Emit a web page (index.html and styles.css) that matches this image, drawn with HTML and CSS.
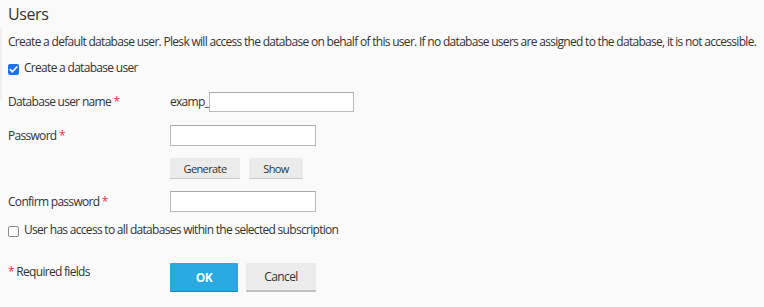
FILE: index.html
```html
<!DOCTYPE html>
<html lang="en">
<head>
<meta charset="utf-8">
<title>Users</title>
<link rel="stylesheet" href="styles.css">
</head>
<body>
<div class="page">
  <div class="edge"></div>
  <h2 class="title">Users</h2>
  <p class="desc">Create a default database user. Plesk will access the database on behalf of this user. If no database users are assigned to the database, it is not accessible.</p>
  <label class="check-row first">
    <span class="box checked"><svg viewBox="0 0 11 11" width="11" height="11"><path d="M2.3 5.6 L4.4 7.8 L8.8 3.0" fill="none" stroke="#fff" stroke-width="1.7" stroke-linecap="round" stroke-linejoin="round"/></svg></span>
    <span>Create a database user</span>
  </label>
  <div class="row r-user">
    <div class="label">Database user name <span class="req">*</span></div>
    <div class="field"><span class="prefix">examp_</span><span class="input w-user"></span></div>
  </div>
  <div class="row r-pass">
    <div class="label">Password <span class="req">*</span></div>
    <div class="field"><span class="input w-pass"></span></div>
  </div>
  <div class="row r-btns">
    <div class="label"></div>
    <div class="field gap9"><button class="btn small w-gen">Generate</button><button class="btn small w-show">Show</button></div>
  </div>
  <div class="row r-conf">
    <div class="label">Confirm password <span class="req">*</span></div>
    <div class="field"><span class="input w-pass"></span></div>
  </div>
  <label class="check-row second">
    <span class="box"></span>
    <span>User has access to all databases within the selected subscription</span>
  </label>
  <div class="row r-foot">
    <div class="label foot-label"><span class="req">*</span> Required fields</div>
    <div class="field gap8"><button class="btn primary">OK</button><button class="btn cancel">Cancel</button></div>
  </div>
</div>
</body>
</html>
```

FILE: styles.css
```css
html, body {
  margin: 0;
  padding: 0;
  background: #fafafa;
}
body {
  font-family: "Open Sans", "Liberation Sans", sans-serif;
  font-size: 12px;
  letter-spacing: -0.7px;
  color: #333;
}
.page {
  position: relative;
  padding: 0 8px;
  height: 307px;
  box-sizing: border-box;
  overflow: hidden;
}
.edge {
  position: absolute;
  left: 0;
  top: 28px;
  width: 2px;
  height: 72px;
  background: #efefef;
}
.title {
  margin: 0;
  padding-top: 4px;
  font-size: 16px;
  line-height: 20px;
  font-weight: 400;
  letter-spacing: -0.4px;
  color: #333;
}
.desc {
  margin: 10px 0 0;
  line-height: 16px;
  white-space: nowrap;
}
.check-row {
  display: flex;
  align-items: center;
  gap: 5px;
  line-height: 16px;
}
.check-row.first { margin-top: 10px; }
.check-row.second { margin-top: 10px; }
.box {
  width: 11px;
  height: 11px;
  box-sizing: border-box;
  border: 1px solid #8a8a8a;
  border-radius: 2px;
  background: #fff;
  display: inline-flex;
  flex: none;
  position: relative;
  top: 1px;
}
.box.checked {
  border: none;
  background: #1a73e8;
}
.box svg { display: block; }
.row {
  display: flex;
  align-items: center;
}
.r-user { margin-top: 16px; height: 20px; }
.r-pass { margin-top: 13px; height: 21px; }
.r-btns { margin-top: 12px; height: 21px; }
.r-conf { margin-top: 12px; height: 21px; }
.r-foot { margin-top: 25px; align-items: flex-start; }
.label {
  width: 162px;
  flex: none;
  line-height: 16px;
}
.foot-label { padding-top: 1px; }
.req { color: #d7334a; }
.field {
  display: flex;
  align-items: center;
}
.gap9 { gap: 9px; }
.gap8 { gap: 8px; }
.prefix { line-height: 16px; }
.input {
  display: block;
  box-sizing: border-box;
  height: 21px;
  background: #fff;
  border: 1px solid #b9b9b9;
  border-top-color: #a9a9a9;
}
.w-user { width: 145px; height: 20px; }
.w-pass { width: 146px; }
.btn {
  font-family: "Open Sans", "Liberation Sans", sans-serif;
  letter-spacing: -0.6px;
  border: none;
  padding: 0;
  margin: 0;
  cursor: pointer;
  border-radius: 1px;
}
.btn.small {
  height: 21px;
  background: #ebebeb;
  border-bottom: 1px solid #c9c9c9;
  font-size: 11px;
  color: #333;
}
.w-gen { width: 70px; }
.w-show { width: 54px; }
.btn.primary {
  width: 68px;
  height: 29px;
  background: #28a9df;
  border-bottom: 1px solid #1d86b5;
  color: #fff;
  font-size: 12px;
  font-weight: 700;
}
.btn.cancel {
  width: 70px;
  height: 29px;
  background: #ebebeb;
  border-bottom: 2px solid #c2c2c2;
  color: #333;
  font-size: 12px;
}
```
